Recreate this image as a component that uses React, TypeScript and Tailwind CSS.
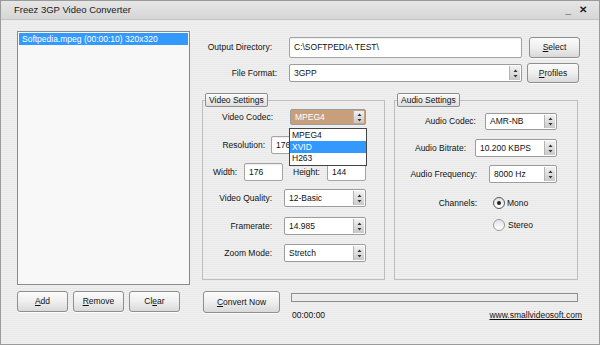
import React from "react";

const font = { fontFamily: '"Liberation Sans", Arial, sans-serif' };

function Spin() {
  return (
    <span className="flex h-full w-[11px] items-center justify-center border-l border-[#b4b4b4] bg-gradient-to-b from-[#f2f2f2] to-[#c9c9c9]">
      <svg width="5" height="9" viewBox="0 0 5 9" aria-hidden="true">
        <path d="M2.5 0.5 L4.5 3 L0.5 3 Z" fill="#333" />
        <path d="M2.5 8.5 L4.5 6 L0.5 6 Z" fill="#333" />
      </svg>
    </span>
  );
}

function Select({
  text,
  w,
  h = "h-[18px]",
  tan = false,
  children,
}: {
  text: string;
  w: string;
  h?: string;
  tan?: boolean;
  children?: React.ReactNode;
}) {
  return (
    <div
      className={`relative flex ${w} ${h} items-stretch rounded-[2px] border border-[#9c9c9c] p-px ${
        tan ? "bg-[#c7a07b]" : "bg-white"
      }`}
    >
      <span
        className={`flex flex-1 items-center pl-[3px] ${tan ? "text-white" : "text-[#111]"}`}
      >
        {text}
      </span>
      <Spin />
      {children}
    </div>
  );
}

function Input({ text, w, h = "h-[18px]" }: { text: string; w: string; h?: string }) {
  return (
    <div
      className={`flex ${w} ${h} items-center rounded-[2px] border border-[#a4a4a4] bg-white pl-[4px] text-[#111] shadow-[inset_0_1px_1px_rgba(0,0,0,0.08)]`}
    >
      {text}
    </div>
  );
}

function Btn({ children, cls }: { children: React.ReactNode; cls: string }) {
  return (
    <div
      className={`flex ${cls} items-center justify-center rounded-[3px] border border-[#8f8f8f] bg-gradient-to-b from-[#fbfbfb] via-[#efefef] to-[#d9d9d9] text-[#111] shadow-[0_1px_0_rgba(255,255,255,0.8)]`}
    >
      {children}
    </div>
  );
}

function Label({ children, cls }: { children: React.ReactNode; cls: string }) {
  return <span className={`shrink-0 text-right ${cls}`}>{children}</span>;
}

function Radio({ checked }: { checked?: boolean }) {
  return (
    <span
      className={`flex h-[12px] w-[12px] items-center justify-center rounded-full border bg-gradient-to-b from-[#e4e4e4] to-[#ffffff] ${
        checked ? "border-[#555]" : "border-[#9a9a9a]"
      }`}
    >
      {checked && <span className="h-[4px] w-[4px] rounded-full bg-[#222]" />}
    </span>
  );
}

function Legend({ children }: { children: React.ReactNode }) {
  return (
    <legend className="ml-[2px] flex h-[14px] items-center rounded-[2px] border border-[#8f8f8f] bg-gradient-to-b from-[#fbfbfb] to-[#dedede] px-[3px] text-[#111]">
      {children}
    </legend>
  );
}

export default function App() {
  return (
    <div
      style={font}
      className="flex h-[345px] w-[600px] flex-col overflow-hidden border border-[#9a9a9a] bg-[repeating-linear-gradient(0deg,#f0f0f0_0px,#f0f0f0_1px,#e9e9e9_1px,#e9e9e9_2px)] text-[8.5px] leading-none text-[#111]"
    >
      <div className="flex h-[19px] shrink-0 items-center justify-between border-b border-[#c4c4c4] bg-gradient-to-b from-[#e6e6e6] to-[#d6d6d6] pl-[13px] pr-[12px]">
        <span className="text-[9.5px] text-[#1a1a1a]">Freez 3GP Video Converter</span>
        <span className="flex items-center gap-[8px] text-[10px] font-bold text-[#222]">
          <span>_</span>
          <span>✕</span>
        </span>
      </div>

      <div className="flex pl-[16px] pt-[11px]">
        {/* left column */}
        <div className="flex w-[173px] flex-col">
          <div className="h-[254px] border border-[#8a8a8a] bg-[#f8f8f8] p-px">
            <div className="flex h-[12px] items-center bg-[#3399ff] pl-[3px] text-white">
              Softpedia.mpeg (00:00:10) 320x320
            </div>
          </div>
          <div className="mt-[6px] flex gap-[5px]">
            <Btn cls="w-[51px] h-[21px]">
              <span className="underline">A</span>dd
            </Btn>
            <Btn cls="w-[51px] h-[21px]">
              <span className="underline">R</span>emove
            </Btn>
            <Btn cls="w-[51px] h-[21px]">
              Cl<span className="underline">e</span>ar
            </Btn>
          </div>
        </div>

        {/* right column */}
        <div className="ml-[12px] flex w-[380px] flex-col">
          <div className="mt-[6px] flex h-[21px] items-center">
            <Label cls="w-[87px] pr-[17px]">Output Directory:</Label>
            <Input text="C:\SOFTPEDIA TEST\" w="w-[233px]" h="h-[21px]" />
            <Btn cls="ml-[7px] w-[51px] h-[21px]">
              <span className="underline">S</span>elect
            </Btn>
          </div>
          <div className="mt-[5px] flex h-[20px] items-center">
            <Label cls="w-[87px] pr-[12px]">File Format:</Label>
            <Select text="3GPP" w="w-[233px]" />
            <Btn cls="ml-[5px] w-[52px] h-[20px]">
              <span className="underline">P</span>rofiles
            </Btn>
          </div>

          <div className="mt-[10px] flex gap-[9px]">
            {/* video settings */}
            <fieldset className="flex h-[187px] w-[183px] flex-col border border-[#bdbdbd]">
              <Legend>Video Settings</Legend>
              <div className="mt-[2px] flex h-[16px] items-center">
                <Label cls="w-[87px] pr-[17px]">Video Codec:</Label>
                <Select text="MPEG4" w="w-[76px]" h="h-[16px]" tan>
                  <div className="absolute left-[-2px] top-[18px] z-10 flex w-[78px] flex-col border border-[#444] bg-white py-px">
                    <span className="flex h-[11px] items-center pl-[2px]">MPEG4</span>
                    <span className="flex h-[12px] items-center bg-[#3399ff] pl-[2px] text-white">
                      XVID
                    </span>
                    <span className="flex h-[11px] items-center pl-[2px]">H263</span>
                  </div>
                </Select>
              </div>
              <div className="mt-[11px] flex h-[18px] items-center">
                <Label cls="w-[68px] pr-[6px]">Resolution:</Label>
                <Input text="176x144" w="w-[95px]" />
              </div>
              <div className="mt-[9px] flex h-[18px] items-center">
                <span className="w-[41px] shrink-0 pl-[10px]">Width:</span>
                <Input text="176" w="w-[39px]" />
                <span className="w-[44px] shrink-0 pl-[10px]">Height:</span>
                <Input text="144" w="w-[39px]" />
              </div>
              <div className="mt-[8px] flex h-[18px] items-center">
                <Label cls="w-[81px] pr-[12px]">Video Quality:</Label>
                <Select text="12-Basic" w="w-[82px]" />
              </div>
              <div className="mt-[10px] flex h-[18px] items-center">
                <Label cls="w-[81px] pr-[12px]">Framerate:</Label>
                <Select text="14.985" w="w-[82px]" />
              </div>
              <div className="mt-[9px] flex h-[18px] items-center">
                <Label cls="w-[81px] pr-[12px]">Zoom Mode:</Label>
                <Select text="Stretch" w="w-[82px]" />
              </div>
            </fieldset>

            {/* audio settings */}
            <fieldset className="flex h-[187px] w-[184px] flex-col border border-[#bdbdbd]">
              <Legend>Audio Settings</Legend>
              <div className="mt-[6px] flex h-[17px] items-center">
                <Label cls="w-[90px] pr-[9px]">Audio Codec:</Label>
                <Select text="AMR-NB" w="w-[72px]" h="h-[17px]" />
              </div>
              <div className="mt-[9px] flex h-[18px] items-center">
                <Label cls="w-[80px] pr-[9px]">Audio Bitrate:</Label>
                <Select text="10.200 KBPS" w="w-[82px]" />
              </div>
              <div className="mt-[8px] flex h-[18px] items-center">
                <Label cls="w-[94px] pr-[12px]">Audio Frequency:</Label>
                <Select text="8000 Hz" w="w-[68px]" />
              </div>
              <div className="mt-[14px] flex h-[12px] items-center">
                <Label cls="w-[98px] pr-[16px]">Channels:</Label>
                <Radio checked />
                <span className="ml-[2px]">Mono</span>
              </div>
              <div className="mt-[10px] flex h-[12px] items-center pl-[98px]">
                <Radio />
                <span className="ml-[3px]">Stereo</span>
              </div>
            </fieldset>
          </div>

          <div className="mt-[11px] flex">
            <Btn cls="ml-px w-[77px] h-[22px]">
              <span className="underline">C</span>onvert Now
            </Btn>
            <div className="ml-[11px] flex flex-1 flex-col">
              <div className="mt-[2px] h-[9px] w-[287px] border border-[#8f8f8f] bg-[#ececec]" />
              <div className="mt-[9px] flex items-center justify-between pl-px">
                <span>00:00:00</span>
                <span className="underline">www.smallvideosoft.com</span>
              </div>
            </div>
          </div>
        </div>
      </div>
    </div>
  );
}
